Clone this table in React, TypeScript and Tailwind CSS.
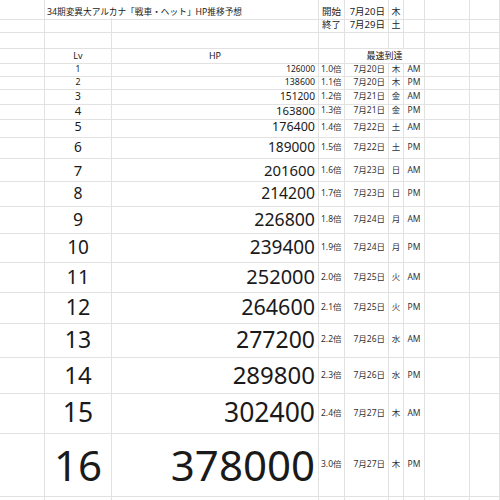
import React from "react";

const rows: [number, string, string, string, string, string, number, number][] = [
  [1, "126000", "1.0倍", "7月20日", "木", "AM", 13, 8.4],
  [2, "138600", "1.1倍", "7月20日", "木", "PM", 13, 8.8],
  [3, "151200", "1.2倍", "7月21日", "金", "AM", 13, 10.2],
  [4, "163800", "1.3倍", "7月21日", "金", "PM", 16, 11.4],
  [5, "176400", "1.4倍", "7月22日", "土", "AM", 19, 12.5],
  [6, "189000", "1.5倍", "7月22日", "土", "PM", 22, 13.7],
  [7, "201600", "1.6倍", "7月23日", "日", "AM", 23, 14.9],
  [8, "214200", "1.7倍", "7月23日", "日", "PM", 24, 15.7],
  [9, "226800", "1.8倍", "7月24日", "月", "AM", 27, 17.7],
  [10, "239400", "1.9倍", "7月24日", "月", "PM", 29, 19],
  [11, "252000", "2.0倍", "7月25日", "火", "AM", 29, 20],
  [12, "264600", "2.1倍", "7月25日", "火", "PM", 31, 21.5],
  [13, "277200", "2.2倍", "7月26日", "水", "AM", 35, 23],
  [14, "289800", "2.3倍", "7月26日", "水", "PM", 36, 24],
  [15, "302400", "2.4倍", "7月27日", "木", "AM", 40, 26.5],
  [16, "378000", "3.0倍", "7月27日", "木", "PM", 63, 42],
];

const grid =
  "grid grid-cols-[45px_67px_207px_26px_44px_15px_21px_45px_1fr]";
const c = "border-r border-b border-[#e2e2e2] flex items-center overflow-visible whitespace-nowrap";

export default function App() {
  return (
    <div
      className="w-[500px] h-[500px] overflow-hidden bg-white text-[#1a1a1a]"
      style={{ fontFamily: '"Noto Sans", "Noto Sans CJK JP", sans-serif' }}
    >
      {/* title row */}
      <div className={`${grid} h-[18px]`}>
        <div className={c} />
        <div className={`${c} col-span-2 pl-[2px] pt-[5px] text-[8.7px]`}>
          34期変異大アルカナ「戦車・ヘット」HP推移予想
        </div>
        <div className={`${c} justify-center pt-[5px] text-[9.5px]`}>開始</div>
        <div className={`${c} justify-end pr-[3px] pt-[5px] text-[9.5px]`}>7月20日</div>
        <div className={`${c} justify-center pt-[5px] text-[9px]`}>木</div>
        <div className={c} />
        <div className={c} />
        <div className={c} />
      </div>
      <div className={`${grid} h-[15px]`}>
        <div className={c} />
        <div className={c} />
        <div className={c} />
        <div className={`${c} justify-center text-[9.5px]`}>終了</div>
        <div className={`${c} justify-end pr-[3px] text-[9.5px]`}>7月29日</div>
        <div className={`${c} justify-center text-[9px]`}>土</div>
        <div className={c} />
        <div className={c} />
        <div className={c} />
      </div>
      <div className={`${grid} h-[16px]`}>
        {Array.from({ length: 9 }).map((_, i) => (
          <div key={i} className={c} />
        ))}
      </div>
      {/* header */}
      <div className={`${grid} h-[14px]`}>
        <div className={c} />
        <div className={`${c} justify-center text-[9px]`}>Lv</div>
        <div className={`${c} justify-center text-[9px]`}>HP</div>
        <div className={c} />
        <div className={`${c} col-span-3 justify-center text-[9px]`}>最速到達</div>
        <div className={c} />
        <div className={c} />
      </div>
      {rows.map(([lv, hp, mult, date, day, ap, h, fs]) => (
        <div key={lv} className={grid} style={{ height: h }}>
          <div className={c} />
          <div className={`${c} justify-center`} style={{ fontSize: fs }}>
            {lv}
          </div>
          <div className={`${c} justify-end pr-[3px]`} style={{ fontSize: fs }}>
            {hp}
          </div>
          <div className={`${c} pl-[2px] text-[8.5px] text-[#333]`}>{mult}</div>
          <div className={`${c} justify-end pr-[3px] text-[8.5px] text-[#333]`}>{date}</div>
          <div className={`${c} justify-center text-[8.5px] text-[#333]`}>{day}</div>
          <div className={`${c} justify-center text-[8.5px] text-[#333]`}>{ap}</div>
          <div className={c} />
          <div className={c} />
        </div>
      ))}
      <div className={`${grid} h-[20px]`}>
        {Array.from({ length: 9 }).map((_, i) => (
          <div key={i} className={c} />
        ))}
      </div>
    </div>
  );
}
